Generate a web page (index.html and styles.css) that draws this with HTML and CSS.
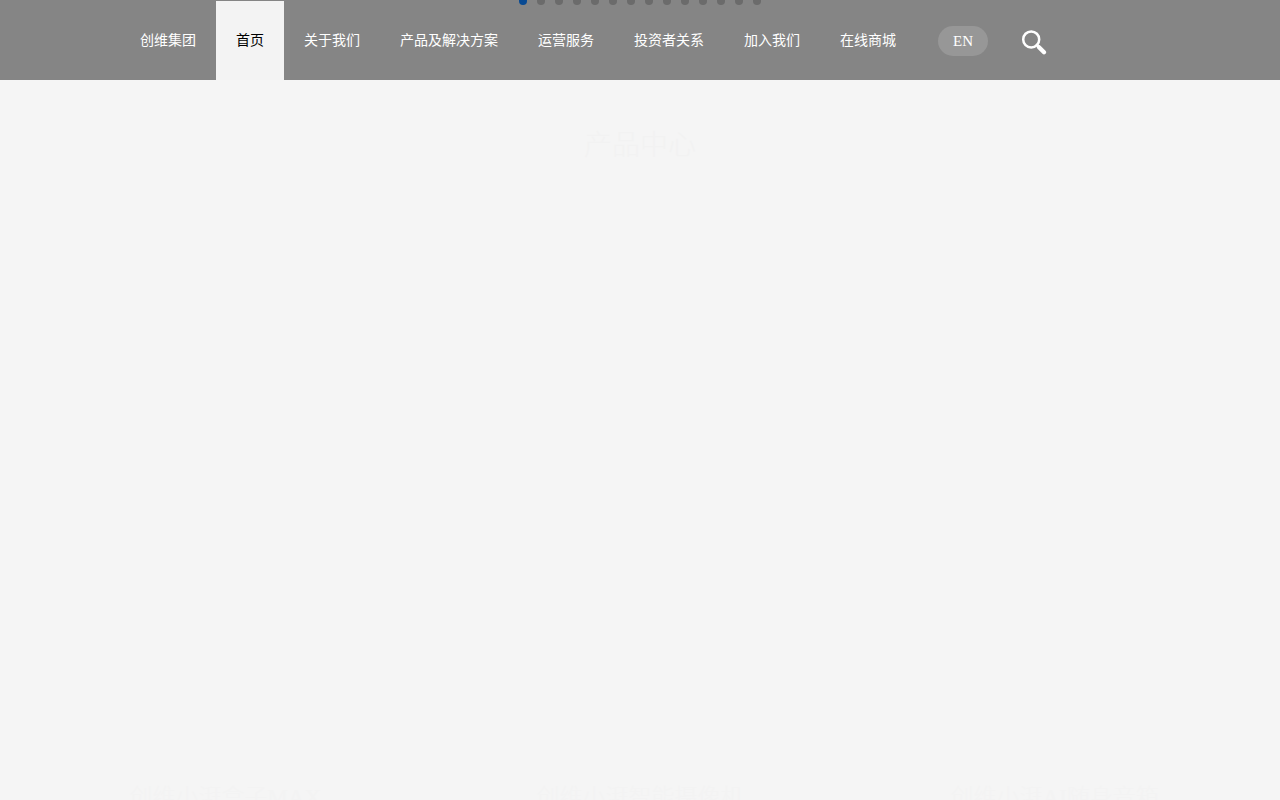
FILE: index.html
```html
<!DOCTYPE html>
<html lang="zh-CN">
<head>
<meta charset="utf-8">
<meta name="viewport" content="width=device-width, initial-scale=1">
<title>首页</title>
<link rel="stylesheet" href="styles.css">
</head>
<body>
<header class="header">
  <div class="pager">
    <i class="dot dot-on"></i><i class="dot"></i><i class="dot"></i><i class="dot"></i><i class="dot"></i><i class="dot"></i><i class="dot"></i><i class="dot"></i><i class="dot"></i><i class="dot"></i><i class="dot"></i><i class="dot"></i><i class="dot"></i><i class="dot"></i>
  </div>
  <nav class="nav">
    <a class="nav-link" href="#">创维集团</a>
    <a class="nav-link nav-active" href="#">首页</a>
    <a class="nav-link" href="#">关于我们</a>
    <a class="nav-link" href="#">产品及解决方案</a>
    <a class="nav-link" href="#">运营服务</a>
    <a class="nav-link" href="#">投资者关系</a>
    <a class="nav-link" href="#">加入我们</a>
    <a class="nav-link" href="#">在线商城</a>
  </nav>
  <a class="lang" href="#" lang="en">EN</a>
  <button class="search" type="button" aria-label="搜索">
    <svg width="26" height="28" viewBox="0 -2 26 28" fill="none" stroke="#fff" stroke-linecap="round">
      <circle cx="10.2" cy="10.4" r="8" stroke-width="2.5"/>
      <path d="M16 16l1.5 1.5" stroke-width="3"/>
      <path d="M18 18.2l5 5" stroke-width="4.2"/>
    </svg>
  </button>
</header>
<main class="products">
  <h1 class="title">产品中心</h1>
  <div class="cards">
    <h2 class="card-name">创维小湃盒子MAX</h2>
    <h2 class="card-name">创维小湃智能摄像机</h2>
    <h2 class="card-name">创维小湃AI随身音箱</h2>
  </div>
</main>
</body>
</html>
```
FILE: styles.css
```css
* {
  box-sizing: border-box;
}

body {
  margin: 0;
  height: 100vh;
  overflow: hidden;
  display: flex;
  flex-direction: column;
  background: #f5f5f5;
  font-family: "Liberation Serif", "Noto Sans CJK SC", serif;
}

.header {
  position: relative;
  flex: none;
  display: flex;
  align-items: center;
  height: 80px;
  padding: 1px 120px 0;
  background: #858585;
}

.pager {
  position: absolute;
  top: -3px;
  left: 0;
  right: 0;
  display: flex;
  justify-content: center;
  gap: 10px;
}

.dot {
  width: 8px;
  height: 8px;
  border-radius: 50%;
  background: #6b6b6b;
}

.dot-on {
  background: #084a93;
}

.nav {
  display: flex;
  align-self: stretch;
}

.nav-link {
  padding: 0 20px;
  color: #fff;
  font-size: 14px;
  line-height: 79px;
  white-space: nowrap;
  text-decoration: none;
}

.nav-active {
  background: #f3f3f3;
  color: #000;
}

.lang {
  width: 50px;
  margin-left: 22px;
  border-radius: 15px;
  background: #979797;
  color: #fff;
  font-size: 15px;
  line-height: 30px;
  text-align: center;
  text-decoration: none;
}

.search {
  display: flex;
  margin-left: 33px;
  padding: 0;
  border: 0;
  background: none;
}

.products {
  flex: 1;
  display: flex;
  flex-direction: column;
  justify-content: space-between;
  min-height: 0;
  padding: 46px 18px 0;
}

.title {
  margin: 0;
  color: #f2f2f2;
  font-size: 28px;
  font-weight: 300;
  line-height: 40px;
  text-align: center;
}

.cards {
  display: grid;
  grid-template-columns: repeat(3, 1fr);
  height: 20px;
}

.card-name {
  margin: 0;
  color: #f3f3f3;
  font-size: 23px;
  font-weight: 300;
  line-height: 36px;
  text-align: center;
  white-space: nowrap;
}
```
